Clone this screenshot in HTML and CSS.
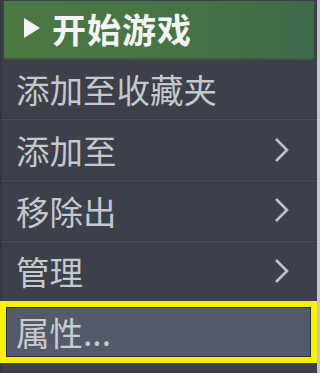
FILE: index.html
```html
<!DOCTYPE html>
<html lang="zh-CN">
<head>
<meta charset="utf-8">
<link rel="stylesheet" href="styles.css">
</head>
<body>
<div class="page">
  <div class="menu">
    <div class="play">
      <svg class="tri" viewBox="0 0 16 20"><polygon points="0,0 16,10 0,20" fill="#f4f4f4"/></svg>
      <span class="play-label">开始游戏</span>
    </div>
    <div class="item">添加至收藏夹</div>
    <div class="sep"></div>
    <div class="item sub"><span>添加至</span><svg class="chev" viewBox="0 0 16 26"><polyline points="2,2 13,13 2,24" fill="none" stroke="#bfc3c8" stroke-width="2.6"/></svg></div>
    <div class="sep"></div>
    <div class="item sub"><span>移除出</span><svg class="chev" viewBox="0 0 16 26"><polyline points="2,2 13,13 2,24" fill="none" stroke="#bfc3c8" stroke-width="2.6"/></svg></div>
    <div class="sep"></div>
    <div class="item sub"><span>管理</span><svg class="chev" viewBox="0 0 16 26"><polyline points="2,2 13,13 2,24" fill="none" stroke="#bfc3c8" stroke-width="2.6"/></svg></div>
    <div class="hl">
      <div class="hl-inner">属性...</div>
    </div>
  </div>
  <div class="edge"></div>
</div>
</body>
</html>
```

FILE: styles.css
```css
html, body {
  margin: 0;
  padding: 0;
}
body {
  width: 320px;
  height: 373px;
  overflow: hidden;
  background: #3b3f4a;
  font-family: "Noto Sans CJK SC", "Noto Sans", sans-serif;
}
.page {
  display: flex;
  height: 373px;
}
.menu {
  width: 317px;
  display: flex;
  flex-direction: column;
  background: #3c404b;
  border-left: 2px solid #343843;
  box-sizing: border-box;
}
.edge {
  width: 3px;
  background: #c4c6ca;
}
.play {
  height: 57px;
  margin: 1px 3px 0 2px;
  display: flex;
  align-items: center;
  gap: 12px;
  padding-left: 20px;
  background: linear-gradient(to right, #4b7842 0%, #477444 50%, #3f6a4b 100%);
  border-bottom: 2px solid #3f5a3d;
  border-radius: 0 0 3px 3px;
}
.tri {
  display: block;
  width: 16px;
  height: 20px;
  flex-shrink: 0;
  margin-top: -2px;
}
.play-label {
  color: #f4f4f4;
  font-size: 34px;
  font-weight: 700;
  letter-spacing: 1px;
  line-height: 1;
}
.item {
  height: 59px;
  display: flex;
  align-items: center;
  justify-content: space-between;
  padding: 0 27px 0 14px;
  color: #c5c8cc;
  font-size: 33.5px;
  line-height: 1;
}
.chev {
  display: block;
  width: 16px;
  height: 26px;
  flex-shrink: 0;
}
.sep {
  height: 2px;
  background: linear-gradient(#363a44 0 50%, #4a4e58 50% 100%);
}
.hl {
  margin: 1px 0 10px -2px;
  height: 62px;
  box-sizing: border-box;
  border: 6px solid #f6f200;
  background: #2e323b;
  padding: 1px;
}
.hl-inner {
  height: 100%;
  background: #545b68;
  display: flex;
  align-items: center;
  padding-left: 9px;
  color: #c8cbcf;
  font-size: 33.5px;
  line-height: 1;
}
```
